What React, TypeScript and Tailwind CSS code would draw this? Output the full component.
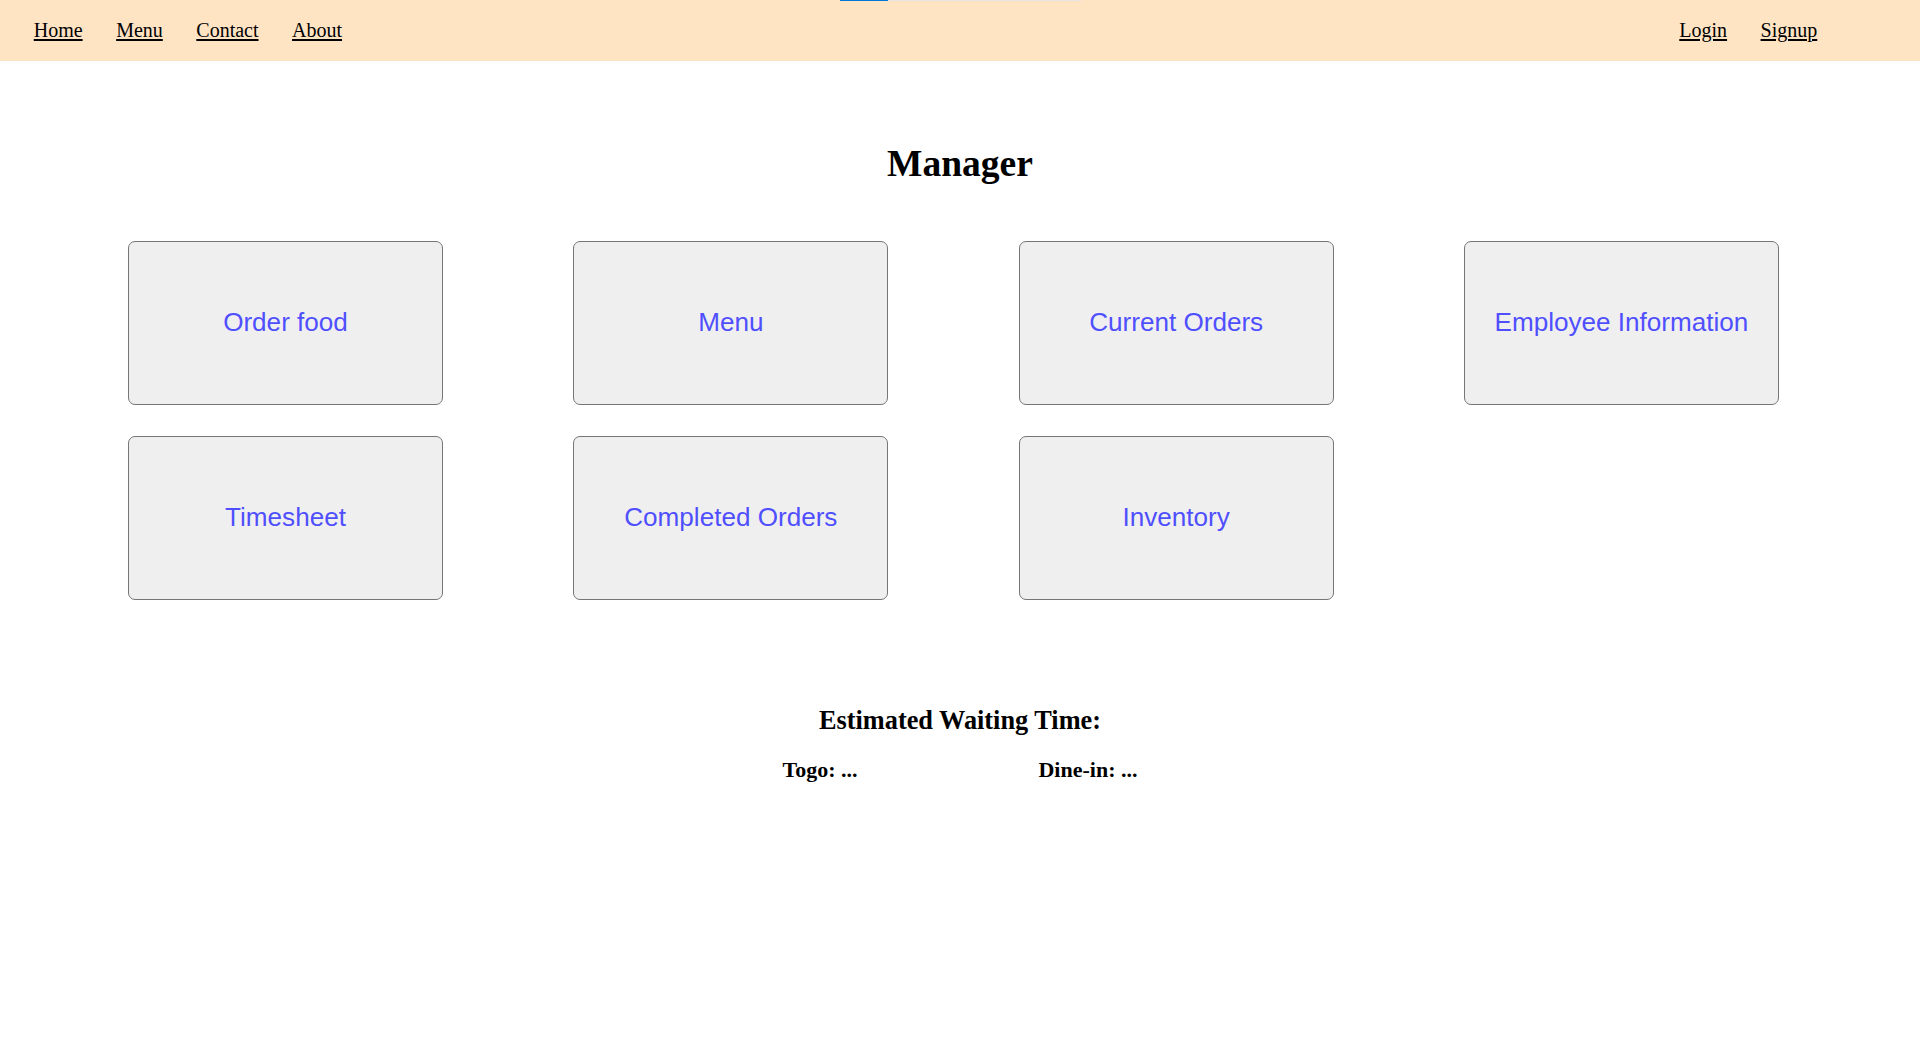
import React from "react";

const serif = { fontFamily: '"Liberation Serif", "Times New Roman", serif' };

const buttons = [
  "Order food",
  "Menu",
  "Current Orders",
  "Employee Information",
  "Timesheet",
  "Completed Orders",
  "Inventory",
];

export default function App() {
  return (
    <div className="relative min-h-[1040px] w-full bg-white text-black" style={serif}>
      {/* top loading indicator */}
      <div className="absolute left-[840px] top-0 flex h-px">
        <div className="h-px w-[48px] bg-[#0078d7]" />
        <div className="h-px w-[193px] bg-[#e6e6e6]" />
      </div>

      <nav className="flex h-[61px] items-center justify-between bg-[#ffe4c4] pl-[17px] pr-[86px] text-[20px] leading-[23px]">
        <div className="flex">
          {["Home", "Menu", "Contact", "About"].map((t) => (
            <a key={t} href="#" className="px-[16.75px] underline decoration-[1.5px] underline-offset-[2px]">
              {t}
            </a>
          ))}
        </div>
        <div className="flex">
          {["Login", "Signup"].map((t) => (
            <a key={t} href="#" className="px-[16.75px] underline decoration-[1.5px] underline-offset-[2px]">
              {t}
            </a>
          ))}
        </div>
      </nav>

      <h1 className="mt-[81px] text-center text-[37.5px] font-bold leading-[44px]">Manager</h1>

      <div className="mt-[55px] grid grid-cols-[repeat(4,315px)] gap-x-[130.33px] gap-y-[31px] pl-[128px]">
        {buttons.map((b) => (
          <button
            key={b}
            className="flex h-[164px] w-[315px] items-center justify-center rounded-[7px] border border-[#767676] bg-[#efefef] text-[26.1px] text-[#4f4fff]"
            style={{ fontFamily: '"Liberation Sans", Arial, sans-serif' }}
          >
            {b}
          </button>
        ))}
      </div>

      <h2 className="mt-[105.7px] text-center text-[26.3px] font-bold leading-[30px]">Estimated Waiting Time:</h2>

      <div className="mt-[21.5px] flex justify-center gap-[181px] text-[22px] font-bold leading-[25px]">
        <span>Togo: ...</span>
        <span>Dine-in: ...</span>
      </div>
    </div>
  );
}
